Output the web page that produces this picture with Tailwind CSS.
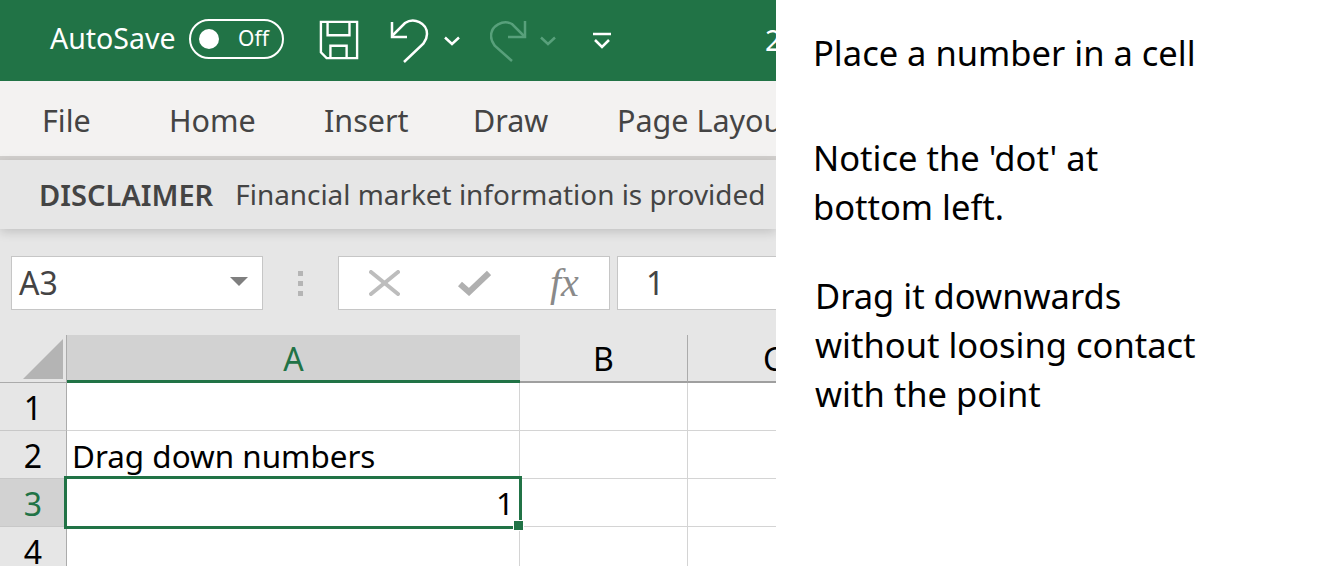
<!DOCTYPE html>
<html lang="en">
<head>
  <meta charset="UTF-8">
  <title>Drag down numbers</title>
  <script src="https://cdn.jsdelivr.net/npm/@tailwindcss/browser@4"></script>
</head>
<body class="bg-white font-['Noto_Sans',sans-serif] overflow-hidden">
  <div class="flex h-[566px] w-[1339px] overflow-hidden">
    <!-- excel window -->
    <div class="w-[776px] shrink-0 overflow-hidden bg-[#e6e6e6]">
      <!-- title bar -->
      <div class="h-[81px] bg-[#217346] flex items-center pl-[50px] text-white whitespace-nowrap">
        <span class="text-[28.5px] leading-none w-[139px] shrink-0 mb-[5px]">AutoSave</span>
        <div class="w-[95px] h-[40px] shrink-0 border-2 border-white rounded-full flex items-center pl-[8px] mb-[4px]">
          <span class="w-[20px] h-[20px] rounded-full bg-white"></span>
          <span class="text-[21px] leading-none ml-[19px]">Off</span>
        </div>
        <svg class="ml-[35px] mb-[2px] shrink-0" width="40" height="40" viewBox="0 0 42 42" fill="none" stroke="white" stroke-width="2.5">
          <path d="M2 2H40V40H8L2 34Z"/><path d="M9 2V16H32V2"/><path d="M12 40V27H29V40"/>
        </svg>
        <svg class="ml-[31px] shrink-0" width="40" height="46" viewBox="0 0 40 46" fill="none" stroke="white" stroke-width="2.5">
          <path d="M2 4V19H17"/><path d="M2 19L15 6C24 0 37 6 37 17C37 22 35 24 33 27L14 45" transform="translate(0 -1)"/>
        </svg>
        <svg class="ml-[14px] shrink-0" width="16" height="10" viewBox="0 0 16 10" fill="none" stroke="white" stroke-width="2.5"><path d="M1 1.5L8 8L15 1.5"/></svg>
        <svg class="ml-[30px] shrink-0" width="38" height="42" viewBox="0 0 38 42" fill="none" stroke="#58a07b" stroke-width="2.5">
          <path d="M35 1V17H18"/><path d="M35 17L22 4C13 -1 1 6 1 16C1 21 3 23 5 26L22 41"/>
        </svg>
        <svg class="ml-[12px] shrink-0" width="16" height="10" viewBox="0 0 16 10" fill="none" stroke="#58a07b" stroke-width="2.5"><path d="M1 1.5L8 8L15 1.5"/></svg>
        <svg class="ml-[37px] shrink-0" width="18" height="18" viewBox="0 0 18 18" fill="none" stroke="white" stroke-width="2.5"><path d="M0 2H18"/><path d="M2 8L9 15L16 8"/></svg>
        <span class="text-[28.5px] leading-none ml-[154px] shrink-0">2</span>
      </div>
      <!-- tabs -->
      <div class="h-[79px] bg-[#f3f2f1] border-b-4 border-[#d2d0ce] flex items-center pt-[3px] pl-[42px] text-[30.5px] leading-none text-[#444] whitespace-nowrap">
        <span class="w-[127px] shrink-0">File</span>
        <span class="w-[155px] shrink-0">Home</span>
        <span class="w-[149px] shrink-0">Insert</span>
        <span class="w-[144px] shrink-0">Draw</span>
        <span class="shrink-0">Page Layout</span>
      </div>
      <!-- disclaimer -->
      <div class="h-[69px] bg-[#e6e6e6] flex items-center pl-[39px] text-[#444] text-[29px] leading-none whitespace-nowrap shadow-[0_3px_10px_rgba(0,0,0,0.16)] relative">
        <b class="font-semibold">DISCLAIMER</b>
        <span class="ml-[22px] text-[27.9px]">Financial market information is provided</span>
      </div>
      <!-- formula bar -->
      <div class="h-[54px] mt-[27px] flex whitespace-nowrap">
        <div class="ml-[11px] w-[252px] border border-[#c6c6c6] bg-white flex items-center justify-between pl-[7px] pr-[14px] text-[32px] text-[#444]">
          <span>A3</span>
          <span class="w-0 h-0 border-x-[9px] border-x-transparent border-t-[9px] border-t-[#7f7f7f] mb-[4px]"></span>
        </div>
        <div class="w-[75px] flex flex-col items-center justify-center gap-[5px]">
          <span class="w-[5px] h-[5px] bg-[#b5b5b5]"></span>
          <span class="w-[5px] h-[5px] bg-[#b5b5b5]"></span>
          <span class="w-[5px] h-[5px] bg-[#b5b5b5]"></span>
        </div>
        <div class="w-[272px] border border-[#c6c6c6] bg-white flex items-center">
          <svg class="ml-[30px] shrink-0" width="31" height="26" viewBox="0 0 31 26" fill="none" stroke="#bdbdbd" stroke-width="4" stroke-linecap="round"><path d="M2 2L29 24"/><path d="M29 2L2 24"/></svg>
          <svg class="ml-[58px] shrink-0" width="33" height="26" viewBox="0 0 33 26" fill="none" stroke="#b0b0b0" stroke-width="6"><path d="M2 14L11 22L31 3"/></svg>
          <span class="ml-[59px] text-[40px] leading-none italic text-[#8a8a8a] font-['Liberation_Serif',serif]">fx</span>
        </div>
        <div class="ml-[7px] flex-1 border border-[#c6c6c6] border-r-0 bg-white flex items-center pl-[28px] text-[32px] text-[#444]">1</div>
      </div>
      <!-- sheet -->
      <div class="mt-[25px] w-[860px] text-black whitespace-nowrap">
        <!-- column headers -->
        <div class="flex h-[48px] text-[32px]">
          <div class="w-[67px] relative border-r border-[#ababab] border-b border-b-[#ababab]">
            <svg class="absolute right-[3px] bottom-[3px]" width="40" height="40" viewBox="0 0 40 40"><path d="M40 0V40H0Z" fill="#b4b4b4"/></svg>
          </div>
          <div class="w-[453px] bg-[#d2d2d2] border-b-[3px] border-[#217346] flex items-center justify-center pt-[2px] text-[#217346]">A</div>
          <div class="w-[168px] border-r border-[#ababab] border-b-2 border-b-[#9f9f9f] flex items-center justify-center pt-[2px]">B</div>
          <div class="w-[170px] border-b-2 border-[#9f9f9f] flex items-center justify-center pt-[2px]">C</div>
        </div>
        <!-- rows -->
        <div class="flex h-[48px] text-[32px] leading-none bg-white">
          <div class="w-[67px] bg-[#e6e6e6] border-r border-r-[#ababab] border-b border-b-[#c8c8c8] flex items-center justify-center pt-[2px]">1</div>
          <div class="w-[453px] border-r border-b border-[#d4d4d4]"></div>
          <div class="w-[168px] border-r border-b border-[#d4d4d4]"></div>
          <div class="flex-1 border-b border-[#d4d4d4]"></div>
        </div>
        <div class="flex h-[48px] text-[32px] leading-none bg-white">
          <div class="w-[67px] bg-[#e6e6e6] border-r border-r-[#ababab] border-b border-b-[#c8c8c8] flex items-center justify-center pt-[2px]">2</div>
          <div class="w-[453px] border-r border-b border-[#d4d4d4] flex items-center pl-[5px] pt-[2px] text-[31.4px]">Drag down numbers</div>
          <div class="w-[168px] border-r border-b border-[#d4d4d4]"></div>
          <div class="flex-1 border-b border-[#d4d4d4]"></div>
        </div>
        <div class="flex h-[48px] text-[32px] leading-none bg-white">
          <div class="w-[67px] bg-[#d2d2d2] border-r border-r-[#ababab] border-b border-b-[#c8c8c8] flex items-center justify-center pt-[2px] text-[#217346]">3</div>
          <div class="w-[453px] border-r border-b border-[#d4d4d4] relative">
            <div class="absolute left-[-3px] right-[-3px] top-[-3px] bottom-[-3px] border-[3px] border-[#217346] flex items-center justify-end pr-[5px] text-[31.4px]">1</div>
            <span class="absolute right-[-5px] bottom-[-5px] w-[9px] h-[9px] bg-[#217346] border border-white box-content"></span>
          </div>
          <div class="w-[168px] border-r border-b border-[#d4d4d4]"></div>
          <div class="flex-1 border-b border-[#d4d4d4]"></div>
        </div>
        <div class="flex h-[48px] text-[32px] leading-none bg-white">
          <div class="w-[67px] bg-[#e6e6e6] border-r border-r-[#ababab] flex items-center justify-center pt-[2px]">4</div>
          <div class="w-[453px] border-r border-[#d4d4d4]"></div>
          <div class="w-[168px] border-r border-[#d4d4d4]"></div>
          <div class="flex-1"></div>
        </div>
      </div>
    </div>
    <!-- notes -->
    <div class="flex-1 pl-[37px] pt-[28px] text-[34.5px] leading-[49px] text-black whitespace-nowrap">
      <p>Place a number in a cell</p>
      <p class="mt-[56px]">Notice the 'dot' at<br>bottom left.</p>
      <p class="mt-[40px] ml-[2px]">Drag it downwards<br>without loosing contact<br>with the point</p>
    </div>
  </div>
</body>
</html>
